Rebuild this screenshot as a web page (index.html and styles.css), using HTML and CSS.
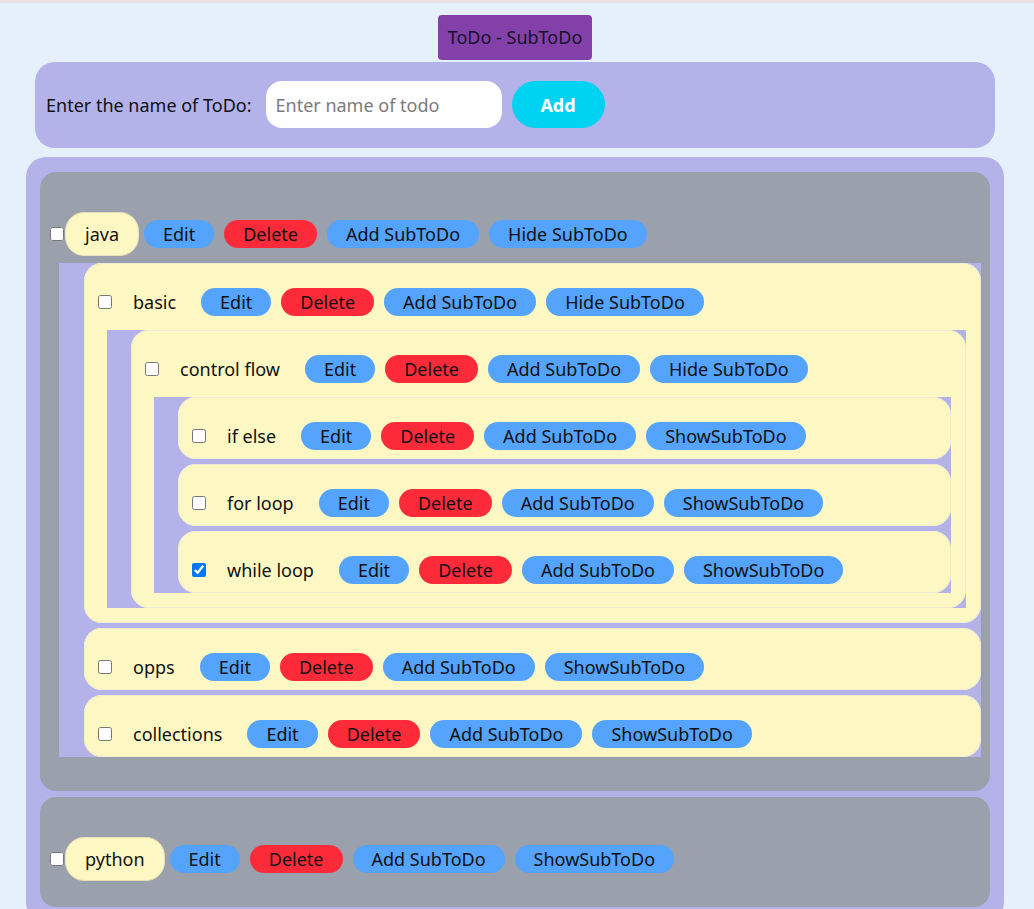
FILE: index.html
```html
<!DOCTYPE html>
<html lang="en">
<head>
<meta charset="utf-8">
<title>ToDo - SubToDo</title>
<link rel="stylesheet" href="styles.css">
</head>
<body>
<div class="strip"></div>
<div class="app">
  <div class="title-wrap"><h1 class="title">ToDo - SubToDo</h1></div>

  <form class="add-form">
    <label class="add-label" for="todo-name">Enter the name of ToDo:</label>
    <input id="todo-name" class="add-input" type="text" placeholder="Enter name of todo">
    <button type="button" class="add-btn">Add</button>
  </form>

  <div class="list">
    <div class="todo top">
      <div class="row">
        <input type="checkbox" class="check">
        <span class="name pill">java</span>
        <button class="btn blue">Edit</button>
        <button class="btn red">Delete</button>
        <button class="btn blue">Add SubToDo</button>
        <button class="btn blue">Hide SubToDo</button>
      </div>
      <div class="children top-children">
        <div class="todo sub">
          <div class="row">
            <input type="checkbox" class="check">
            <span class="name">basic</span>
            <button class="btn blue">Edit</button>
            <button class="btn red">Delete</button>
            <button class="btn blue">Add SubToDo</button>
            <button class="btn blue">Hide SubToDo</button>
          </div>
          <div class="children">
            <div class="todo sub">
              <div class="row">
                <input type="checkbox" class="check">
                <span class="name">control flow</span>
                <button class="btn blue">Edit</button>
                <button class="btn red">Delete</button>
                <button class="btn blue">Add SubToDo</button>
                <button class="btn blue">Hide SubToDo</button>
              </div>
              <div class="children">
                <div class="todo sub">
                  <div class="row">
                    <input type="checkbox" class="check">
                    <span class="name">if else</span>
                    <button class="btn blue">Edit</button>
                    <button class="btn red">Delete</button>
                    <button class="btn blue">Add SubToDo</button>
                    <button class="btn blue">ShowSubToDo</button>
                  </div>
                </div>
                <div class="todo sub">
                  <div class="row">
                    <input type="checkbox" class="check">
                    <span class="name">for loop</span>
                    <button class="btn blue">Edit</button>
                    <button class="btn red">Delete</button>
                    <button class="btn blue">Add SubToDo</button>
                    <button class="btn blue">ShowSubToDo</button>
                  </div>
                </div>
                <div class="todo sub">
                  <div class="row">
                    <input type="checkbox" class="check" checked>
                    <span class="name">while loop</span>
                    <button class="btn blue">Edit</button>
                    <button class="btn red">Delete</button>
                    <button class="btn blue">Add SubToDo</button>
                    <button class="btn blue">ShowSubToDo</button>
                  </div>
                </div>
              </div>
            </div>
          </div>
        </div>
        <div class="todo sub">
          <div class="row">
            <input type="checkbox" class="check">
            <span class="name">opps</span>
            <button class="btn blue">Edit</button>
            <button class="btn red">Delete</button>
            <button class="btn blue">Add SubToDo</button>
            <button class="btn blue">ShowSubToDo</button>
          </div>
        </div>
        <div class="todo sub">
          <div class="row">
            <input type="checkbox" class="check">
            <span class="name">collections</span>
            <button class="btn blue">Edit</button>
            <button class="btn red">Delete</button>
            <button class="btn blue">Add SubToDo</button>
            <button class="btn blue">ShowSubToDo</button>
          </div>
        </div>
      </div>
    </div>

    <div class="todo top">
      <div class="row">
        <input type="checkbox" class="check">
        <span class="name pill">python</span>
        <button class="btn blue">Edit</button>
        <button class="btn red">Delete</button>
        <button class="btn blue">Add SubToDo</button>
        <button class="btn blue">ShowSubToDo</button>
      </div>
    </div>
  </div>
</div>
</body>
</html>
```

FILE: styles.css
```css
* {
  box-sizing: border-box;
}

html, body {
  margin: 0;
  padding: 0;
  background: #e6f0fa;
  font-family: "Noto Sans", "Open Sans", sans-serif;
  font-size: 18px;
  color: #111;
}

.strip {
  height: 3px;
  background: #e9e2e2;
}

.app {
  width: 1030px;
}

.title-wrap {
  text-align: center;
  padding-top: 12px;
}

.title {
  display: inline-block;
  margin: 0;
  height: 45px;
  line-height: 45px;
  padding: 0 10px;
  background: #8340a9;
  border-radius: 4px;
  font-size: 18px;
  font-weight: normal;
  color: #15102a;
}

.add-form {
  display: flex;
  align-items: center;
  margin: 2px 35px 0;
  padding: 19px 11px 20px;
  background: #b3b3ea;
  border-radius: 20px;
}

.add-label {
  font-size: 18px;
  color: #111;
}

.add-input {
  margin-left: 14px;
  width: 236px;
  height: 47px;
  padding: 0 10px;
  border: none;
  border-radius: 16px;
  background: #fff;
  font-family: inherit;
  font-size: 18px;
  outline: none;
}

.add-input::placeholder {
  color: #7b7b7b;
}

.add-btn {
  margin-left: 10px;
  width: 93px;
  height: 47px;
  border: none;
  border-radius: 24px;
  background: #00d2f2;
  color: #fff;
  font-family: inherit;
  font-size: 18px;
  font-weight: bold;
}

.list {
  margin: 9px 26px 0;
  padding: 15px 14px;
  background: #b3b3ea;
  border-radius: 20px;
  display: flex;
  flex-direction: column;
  gap: 6px;
}

.todo.top {
  background: #9aa0ac;
  border-radius: 16px;
  padding: 40px 9px 26px 10px;
}

.row {
  display: flex;
  align-items: center;
  height: 28px;
}

.todo.top > .row {
  height: 44px;
}

.check {
  width: 14px;
  height: 14px;
  margin: 0 1px 0 0;
  flex: none;
}

.name {
  padding: 0 20px;
  white-space: nowrap;
  line-height: 28px;
}

.name.pill {
  height: 44px;
  line-height: 42px;
  background: #fdf7c4;
  border: 1px solid #e6e0b8;
  border-radius: 19px;
  padding: 0 19px;
}

.btn {
  height: 28px;
  margin: 0 5px;
  padding: 0 19px;
  border: none;
  border-radius: 14px;
  font-family: inherit;
  font-size: 18px;
  line-height: 28px;
  color: #111;
  white-space: nowrap;
}

.btn.blue {
  background: #54a3fd;
}

.btn.red {
  background: #fd2b39;
}

.children {
  display: flex;
  flex-direction: column;
  gap: 5px;
  background: #b3b3ea;
  margin: 14px 0 6px 9px;
  padding-left: 24px;
}

.children.top-children {
  margin: 7px 0 8px 9px;
  padding-left: 25px;
}

.todo.sub {
  background: #fdf7c4;
  border-radius: 18px;
  padding: 25px 15px 9px 14px;
  box-shadow: inset 0 0 0 1px #efeccf;
}
```
